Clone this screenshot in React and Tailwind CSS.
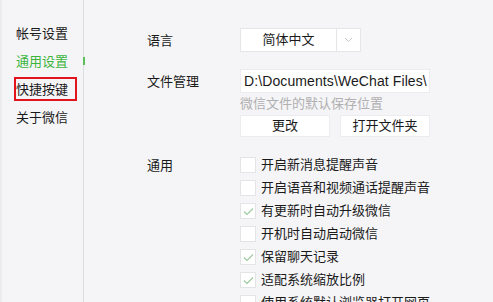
import React from 'react'

const FONT = { fontFamily: '"Noto Sans", "Noto Sans CJK SC", sans-serif' }

const OPTIONS = [
  { label: '开启新消息提醒声音', on: false },
  { label: '开启语音和视频通话提醒声音', on: false },
  { label: '有更新时自动升级微信', on: true },
  { label: '开机时自动启动微信', on: false },
  { label: '保留聊天记录', on: true },
  { label: '适配系统缩放比例', on: true },
  { label: '使用系统默认浏览器打开网页', on: false },
]

function Check({ on }) {
  return (
    <div className="w-[16px] h-[16px] bg-white border border-[#e4e4e6] flex items-center justify-center shrink-0">
      {on && (
        <svg width="11" height="9" viewBox="0 0 11 9" fill="none">
          <path d="M1 4.5 L4 7.5 L10 1.5" stroke="#9cc89c" strokeWidth="1.1" />
        </svg>
      )}
    </div>
  )
}

export default function App() {
  return (
    <div className="w-[493px] h-[302px] overflow-hidden flex bg-[#f5f5f7] text-[#1a1a1a]" style={FONT}>
      <div className="w-[2px] bg-[#ebebed] shrink-0" />

      {/* 侧栏 */}
      <div className="w-[82px] shrink-0 border-r border-[#dddddf] pt-[19px] flex flex-col text-[13px] relative">
        <div className="h-[28px] leading-[28px] pl-[14px]">帐号设置</div>
        <div className="h-[28px] leading-[28px] pl-[14px] text-[#3db43d]">通用设置</div>
        <div className="h-[28px] pl-[12px] pt-[2px]">
          <span className="inline-flex items-center h-[24px] w-[63px] border-2 border-[#e1141b] leading-none">快捷按键</span>
        </div>
        <div className="h-[28px] leading-[28px] pl-[14px]">关于微信</div>
        <div className="absolute right-[-2px] top-[57px] w-[2px] h-[8px] bg-[#5cbf5c]" />
      </div>

      {/* 设置内容 */}
      <div className="flex-1 pl-[63px] pt-[28px] text-[13px]">
        <div className="flex">
          <div className="w-[93px] h-[24px] leading-[24px]">语言</div>
          <div className="flex h-[24px] bg-white border border-[#e6e6e8]">
            <div className="w-[95px] flex items-center justify-center">简体中文</div>
            <div className="w-[24px] border-l border-[#e6e6e8] flex items-center justify-center">
              <svg width="9" height="6" viewBox="0 0 9 6" fill="none">
                <path d="M1 1 L4.5 4.5 L8 1" stroke="#c8c8ca" strokeWidth="1" />
              </svg>
            </div>
          </div>
        </div>

        <div className="flex mt-[17px]">
          <div className="w-[93px] h-[24px] leading-[24px]">文件管理</div>
          <div className="flex flex-col">
            <div className="w-[190px] h-[24px] bg-white border border-[#ececee] pl-[3px] flex items-center text-[14px] tracking-[0.1px] whitespace-nowrap overflow-hidden" style={{ fontFamily: '"Liberation Sans", sans-serif' }}>
              D:\Documents\WeChat Files\
            </div>
            <div className="h-[20px] leading-[20px] text-[#b0b0b2]">微信文件的默认保存位置</div>
            <div className="flex gap-[10px] mt-[2px]">
              <div className="w-[90px] h-[22px] bg-white border border-[#ececee] flex items-center justify-center">更改</div>
              <div className="w-[90px] h-[22px] bg-white border border-[#ececee] flex items-center justify-center">打开文件夹</div>
            </div>
          </div>
        </div>

        <div className="flex mt-[20px]">
          <div className="w-[93px] h-[16px] leading-[16px]">通用</div>
          <div className="flex flex-col gap-[7px]">
            {OPTIONS.map(o => (
              <div key={o.label} className="flex items-center gap-[5px] h-[16px] whitespace-nowrap">
                <Check on={o.on} />
                <span>{o.label}</span>
              </div>
            ))}
          </div>
        </div>
      </div>
    </div>
  )
}
